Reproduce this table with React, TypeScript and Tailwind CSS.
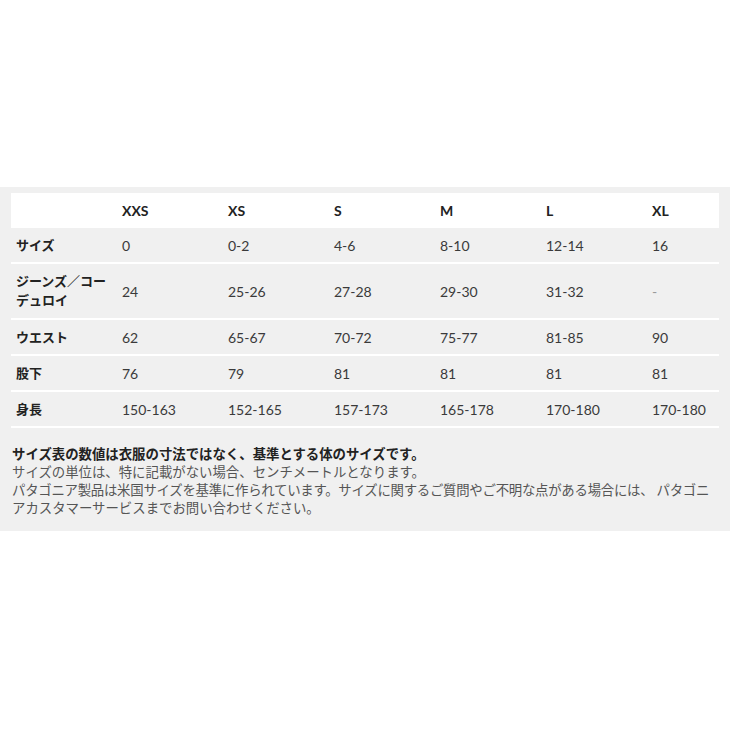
import React from 'react';

const sizes = ['XXS', 'XS', 'S', 'M', 'L', 'XL'];

const rows: { label: React.ReactNode; values: string[]; tall?: boolean }[] = [
  { label: 'サイズ', values: ['0', '0-2', '4-6', '8-10', '12-14', '16'] },
  {
    label: (
      <>
        ジーンズ／コー
        <br />
        デュロイ
      </>
    ),
    values: ['24', '25-26', '27-28', '29-30', '31-32', '-'],
    tall: true,
  },
  { label: 'ウエスト', values: ['62', '65-67', '70-72', '75-77', '81-85', '90'] },
  { label: '股下', values: ['76', '79', '81', '81', '81', '81'] },
  { label: '身長', values: ['150-163', '152-165', '157-173', '165-178', '170-180', '170-180'] },
];

const grid = 'grid grid-cols-[106px_106px_106px_106px_106px_106px_1fr] items-center pl-[5px]';

export default function App() {
  return (
    <main
      className="min-h-[730px] bg-white pt-[187px]"
      style={{ fontFamily: 'Lato, "Noto Sans CJK JP", sans-serif' }}
    >
      <section className="bg-[#f0f0f0] px-[11px] pt-[6px] pb-[14px] text-[14px] text-[#3a3a3a]">
        <div className={`${grid} h-[35px] bg-white font-bold text-[#222]`}>
          <div />
          {sizes.map((s) => (
            <div key={s}>{s}</div>
          ))}
        </div>
        {rows.map((row, i) => (
          <div
            key={i}
            className={`${grid} border-b-2 border-white ${row.tall ? 'h-[56px]' : 'h-[36px]'}`}
          >
            <div className="text-[13px] leading-[19px] font-bold text-[#222]">{row.label}</div>
            {row.values.map((v, j) => (
              <div key={j} className={v === '-' ? 'text-[#999]' : ''}>
                {v}
              </div>
            ))}
          </div>
        ))}
        <div className="mt-[17px] pl-px text-[13.4px] leading-[18px] text-[#555]">
          <p className="font-bold text-[#222]">サイズ表の数値は衣服の寸法ではなく、基準とする体のサイズです。</p>
          <p>サイズの単位は、特に記載がない場合、センチメートルとなります。</p>
          <p className="whitespace-nowrap tracking-[-0.25px]">
            パタゴニア製品は米国サイズを基準に作られています。サイズに関するご質問やご不明な点がある場合には、 パタゴニ
          </p>
          <p>アカスタマーサービスまでお問い合わせください。</p>
        </div>
      </section>
    </main>
  );
}
